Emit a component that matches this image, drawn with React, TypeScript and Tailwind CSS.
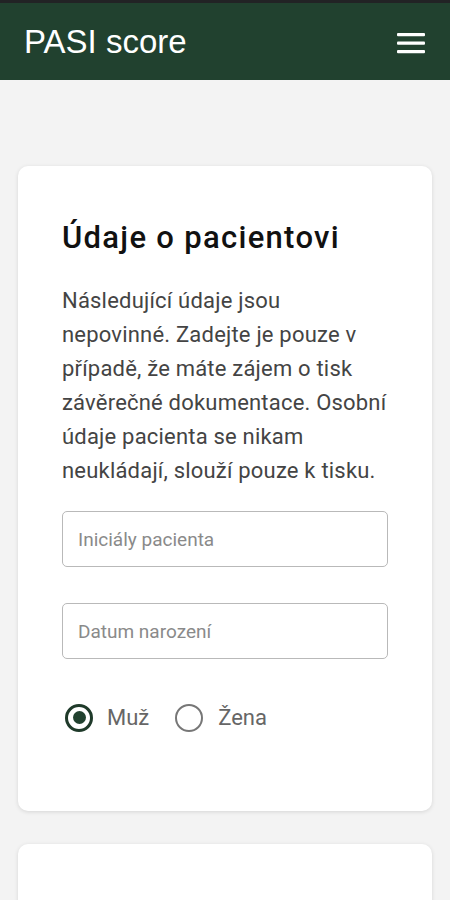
import React from "react";

export default function App() {
  return (
    <div className="min-h-[900px] bg-[#f3f3f3]" style={{ fontFamily: "Roboto, 'Liberation Sans', sans-serif" }}>
      <div className="h-[3px] bg-[#222325]" />
      <header className="h-[77px] bg-[#21412f] flex items-center justify-between pl-[24px] pr-[25px]">
        <h1 className="text-white text-[33px] leading-none" style={{ fontFamily: "'Liberation Sans', Arial, sans-serif" }}>PASI score</h1>
        <svg width="28" height="21" viewBox="0 0 28 21" className="mt-[3px]">
          <rect x="0" y="0" width="28" height="3.2" rx="1" fill="white" />
          <rect x="0" y="8.5" width="28" height="3.2" rx="1" fill="white" />
          <rect x="0" y="17" width="28" height="3.2" rx="1" fill="white" />
        </svg>
      </header>
      <main className="px-[18px] pt-[86px] flex flex-col gap-[33px]">
        <section className="bg-white rounded-[10px] shadow-[0_1px_4px_rgba(0,0,0,0.12)] px-[44px] pt-[54px] pb-[77px]">
          <h2 className="text-[31px] font-medium text-[#111] leading-[36px] tracking-[1.3px]">Údaje o pacientovi</h2>
          <p className="mt-[28px] text-[22px] leading-[34px] text-[#444] whitespace-nowrap tracking-[0.2px]">
            Následující údaje jsou<br />
            nepovinné. Zadejte je pouze v<br />
            případě, že máte zájem o tisk<br />
            závěrečné dokumentace. Osobní<br />
            údaje pacienta se nikam<br />
            neukládají, slouží pouze k tisku.
          </p>
          <input
            placeholder="Iniciály pacienta"
            className="mt-[23px] block w-full h-[56px] border border-[#b9b9b9] rounded-[5px] px-[15px] text-[19px] text-[#333] placeholder:text-[#8a8a8a] outline-none"
          />
          <input
            placeholder="Datum narození"
            className="mt-[36px] block w-full h-[56px] border border-[#b9b9b9] rounded-[5px] px-[15px] text-[19px] text-[#333] placeholder:text-[#8a8a8a] outline-none"
          />
          <div className="mt-[42px] flex items-center text-[22px] text-[#666]">
            <label className="flex items-center">
              <span className="ml-[3px] w-[28px] h-[28px] rounded-full border-[3px] border-[#1f3a2a] flex items-center justify-center">
                <span className="w-[13px] h-[13px] rounded-full bg-[#21412f]" />
              </span>
              <span className="ml-[14px]">Muž</span>
            </label>
            <label className="flex items-center ml-[26px]">
              <span className="w-[28px] h-[28px] rounded-full border-[2px] border-[#777]" />
              <span className="ml-[15px]">Žena</span>
            </label>
          </div>
        </section>
        <section className="bg-white rounded-[10px] shadow-[0_1px_4px_rgba(0,0,0,0.12)] h-[200px]" />
      </main>
    </div>
  );
}
